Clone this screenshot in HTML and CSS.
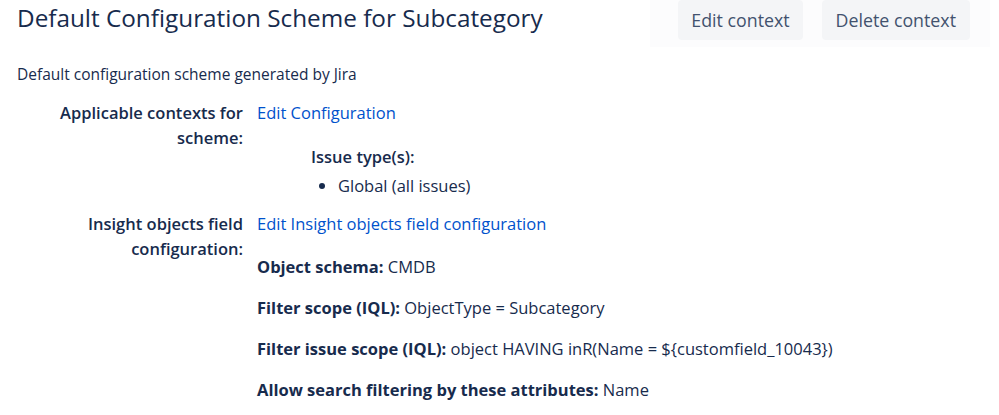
FILE: index.html
```html
<!DOCTYPE html>
<html lang="en">
<head>
  <meta charset="UTF-8" />
  <title>Default Configuration Scheme for Subcategory</title>
  <link rel="stylesheet" href="styles.css">
</head>
<body>
  <div class="header">
    <h1>Default Configuration Scheme for Subcategory</h1>
    <div class="actions">
      <button class="btn">Edit context</button>
      <button class="btn">Delete context</button>
    </div>
  </div>

  <p class="desc">Default configuration scheme generated by Jira</p>

  <div class="row">
    <div class="label">Applicable contexts for scheme:</div>
    <div class="value">
      <a href="#">Edit Configuration</a>
      <div class="issue-types">
        <strong>Issue type(s):</strong>
        <ul>
          <li>Global (all issues)</li>
        </ul>
      </div>
    </div>
  </div>

  <div class="row">
    <div class="label">Insight objects field configuration:</div>
    <div class="value">
      <a href="#">Edit Insight objects field configuration</a>
      <p class="field first"><strong>Object schema:</strong> CMDB</p>
      <p class="field"><strong>Filter scope (IQL):</strong> ObjectType = Subcategory</p>
      <p class="field"><strong>Filter issue scope (IQL):</strong> object HAVING inR(Name = ${customfield_10043})</p>
      <p class="field"><strong>Allow search filtering by these attributes:</strong> Name</p>
    </div>
  </div>
</body>
</html>
```

FILE: styles.css
```css
body {
  margin: 0;
  padding: 0 17px;
  font-family: "Open Sans", sans-serif;
  font-size: 16.5px;
  line-height: 25px;
  color: #172b4d;
  background: #fff;
}
.header {
  display: flex;
  justify-content: space-between;
  align-items: flex-start;
  width: 973px;
}
h1 {
  margin: 3px 0 0;
  font-size: 24.3px;
  line-height: 30px;
  font-weight: 500;
}
.actions {
  display: flex;
  gap: 19px;
  padding: 0 20px 7px 28px;
  background: #fcfcfd;
}
.btn {
  height: 40px;
  padding: 0 13px;
  font-family: inherit;
  font-size: 17.8px;
  color: #42526e;
  background: #f4f5f7;
  border: none;
  border-radius: 4px;
}
.btn + .btn {
  padding: 0 14px;
}
.desc {
  margin: 15px 0 14px;
  font-size: 15.5px;
  line-height: 24px;
}
.row {
  display: flex;
  gap: 14px;
  margin-bottom: 13px;
}
.label {
  width: 226px;
  flex-shrink: 0;
  text-align: right;
  font-weight: 600;
}
a {
  color: #0052cc;
  text-decoration: none;
}
strong {
  font-weight: 700;
}
.issue-types {
  margin: 19px 0 0 54px;
}
.issue-types strong {
  font-weight: 600;
}
.issue-types ul {
  margin: 4px 0 0;
  padding-left: 27px;
}
.field {
  margin: 16px 0 0;
}
.field.first {
  margin-top: 18px;
}
```
